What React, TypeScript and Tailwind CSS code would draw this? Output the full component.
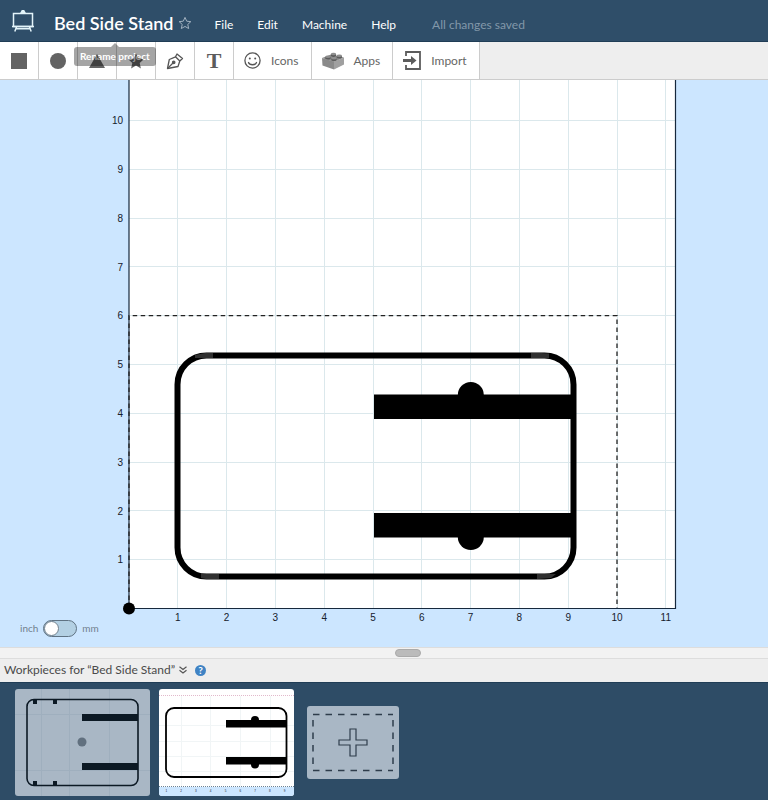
import { useState, type ReactNode } from "react";
import { clsx } from "clsx";

const UNIT = 48.8;
const ORIGIN_X = 129;
const ORIGIN_Y = 528.5;

const menus = ["File", "Edit", "Machine", "Help"];
const columns = Array.from({ length: 11 }, (_, i) => i + 1);
const rows = Array.from({ length: 10 }, (_, i) => i + 1);

function EaselLogo() {
  return (
    <svg viewBox="0 0 22 24" className="h-6 w-[22px]" fill="none" stroke="#e3f4fa" strokeWidth="1.500">
      <rect x="1.500" y="4.500" width="19" height="13" />
      <path d="M0 17.500h22M4.500 18l-1.700 4.500M17.500 18l1.700 4.500M4 19.800h14" />
      <path d="M9 4c0-1 .8-1 1.200-2.200h1.600C12.200 3 13 3 13 4z" fill="#e3f4fa" />
    </svg>
  );
}

function PenIcon() {
  return (
    <svg viewBox="0 0 18 18" className="h-[18px] w-[18px]" fill="none" stroke="#555" strokeWidth="1.300" strokeLinejoin="round">
      <path d="M1.500 16.500L3.300 7.500L9.500 4.800L11 2L16.500 6.500L13.800 9L12 14.500z" />
      <path d="M9.500 4.800L13.800 9M1.500 16.500L7 11" />
      <circle cx="7.700" cy="10.300" r="1.200" fill="#555" />
    </svg>
  );
}

function BrickIcon() {
  return (
    <svg viewBox="0 0 22 18" className="h-[18px] w-[22px]">
      <path d="M0 6L9 2.500L22 5.500L12 10z" fill="#8b8b8b" />
      <path d="M0 6L12 9.500V17.500L0.500 13.500z" fill="#8a8a8a" />
      <path d="M12 9.500L22 5.500V12.500L12 17.500z" fill="#a0a0a0" />
      {[
        [6, 5.5],
        [11.5, 2.8],
        [12, 7],
        [17.3, 4.5],
      ].map(([x, y]) => (
        <g key={x}>
          <path d={`M${x - 2.6} ${y - 0.8}v1.600a2.600 1.300 0 0 0 5.200 0v-1.600z`} fill="#5a5a5a" />
          <ellipse cx={x} cy={y - 0.8} rx="2.600" ry="1.200" fill="#8e8e8e" />
        </g>
      ))}
    </svg>
  );
}

function ImportIcon() {
  return (
    <svg viewBox="0 0 18 19" className="h-[19px] w-[18px]" fill="none" stroke="#5c5c5c" strokeWidth="1.800">
      <path d="M3 5V1H17V18H3V14" />
      <path d="M0 9.500H9" strokeWidth="3" />
      <path d="M8 5L13.500 9.500L8 14z" fill="#5c5c5c" stroke="none" />
    </svg>
  );
}

function SmileIcon() {
  return (
    <svg viewBox="0 0 17 17" className="h-[17px] w-[17px]" fill="none" stroke="#555" strokeWidth="1.300">
      <circle cx="8.500" cy="8.500" r="7.600" />
      <path d="M4.500 10.500c1 3 7 3 8 0" strokeLinecap="round" />
      <circle cx="5.800" cy="6.500" r="1" fill="#555" stroke="none" />
      <circle cx="11.200" cy="6.500" r="1" fill="#555" stroke="none" />
    </svg>
  );
}

const STAR = "M8 .5l2.300 5.100 5.500.600-4.100 3.700 1.200 5.500L8 12.600l-4.900 2.800 1.200-5.500L.2 6.200l5.500-.600z";

const shapes: { label: string; icon: ReactNode }[] = [
  {
    label: "Square",
    icon: (
      <svg viewBox="0 0 16 16" className="h-4 w-4">
        <rect width="16" height="16" fill="#636363" />
      </svg>
    ),
  },
  {
    label: "Circle",
    icon: (
      <svg viewBox="0 0 16 16" className="h-4 w-4">
        <circle cx="8" cy="8" r="8" fill="#636363" />
      </svg>
    ),
  },
  {
    label: "Triangle",
    icon: (
      <svg viewBox="0 0 16 16" className="h-4 w-4">
        <path d="M8 1L16 15H0z" fill="#636363" />
      </svg>
    ),
  },
  {
    label: "Star",
    icon: (
      <svg viewBox="0 0 16 16" className="h-4 w-4">
        <path d={STAR} fill="#636363" />
      </svg>
    ),
  },
  { label: "Pen", icon: <PenIcon /> },
  {
    label: "Text",
    icon: <span className="font-['Liberation_Serif',serif] text-[22px] leading-6 font-bold text-[#5c5c5c]">T</span>,
  },
];

const tools = [
  { label: "Icons", icon: <SmileIcon /> },
  { label: "Apps", icon: <BrickIcon /> },
  { label: "Import", icon: <ImportIcon /> },
];

function Header() {
  return (
    <header className="flex h-[42px] items-center border-b border-[#203d56] bg-[#2f4e69] pl-3 text-white">
      <EaselLogo />
      <div className="relative ml-5 flex items-center gap-1 pt-1">
        <h1 className="text-[18px] leading-6 font-semibold whitespace-nowrap">Bed Side Stand</h1>
        <button type="button" aria-label="Favorite project" className="pl-px">
          <svg viewBox="0 0 16 16" className="h-3 w-3" fill="none" stroke="#a3b3c1" strokeWidth="1.300">
            <path d={STAR} />
          </svg>
        </button>
        {/* Hover hint hanging below the project name, fading in over the toolbar */}
        <div
          role="tooltip"
          className="pointer-events-none absolute top-full left-5 z-10 mt-3 rounded-[3px] bg-black px-[6px] text-[10px] leading-[19px] font-bold whitespace-nowrap text-white opacity-35"
        >
          <span className="absolute -top-1 left-1/2 -ml-1 border-x-4 border-b-4 border-x-transparent border-b-black" />
          Rename project
        </div>
      </div>
      <nav className="ml-6 flex gap-6 pt-2 text-[12px] leading-5">
        {menus.map((menu) => (
          <button key={menu} type="button">
            {menu}
          </button>
        ))}
      </nav>
      <span className="ml-9 pt-2 text-[12px] leading-5 whitespace-nowrap text-[#8298aa]">All changes saved</span>
    </header>
  );
}

function Toolbar() {
  return (
    <div className="flex h-[38px] border-b border-[#ccc] bg-[#eee]">
      {shapes.map(({ label, icon }) => (
        <button
          key={label}
          type="button"
          aria-label={label}
          className="flex w-[39px] items-center justify-center border-r border-[#ccc] bg-white"
        >
          {icon}
        </button>
      ))}
      {tools.map(({ label, icon }) => (
        <button
          key={label}
          type="button"
          className="flex items-center gap-[10px] border-r border-[#ccc] bg-white pr-3 pl-[10px] text-[12px] leading-5 text-[#666]"
        >
          {icon}
          {label}
        </button>
      ))}
    </div>
  );
}

function Workspace() {
  return (
    <svg viewBox="0 0 768 567" className="block w-full" role="img" aria-label="Design area">
      <rect x={ORIGIN_X} y="-2" width="547" height="530.500" fill="#fff" />
      <g stroke="#dbe8ec">
        {columns.map((n) => (
          <path key={n} d={`M${Math.floor(ORIGIN_X + n * UNIT) + 0.5} 0V528`} />
        ))}
        {rows.map((n) => (
          <path key={n} d={`M129 ${Math.floor(ORIGIN_Y - n * UNIT) + 0.5}H675`} />
        ))}
      </g>
      <path d="M129 0V528.500H675.500V0" fill="none" stroke="#16283c" strokeWidth="1.200" />
      <path d="M129 528V235.700H617V528" fill="none" stroke="#222" strokeWidth="1.300" strokeDasharray="4.500 3.500" />
      <g className="font-['Liberation_Sans',sans-serif] text-[10px]" fill="#16202c">
        {columns.map((n) => (
          <text key={n} x={ORIGIN_X + n * UNIT} y="541" textAnchor="middle">
            {n}
          </text>
        ))}
        {rows.map((n) => (
          <text key={n} x="123" y={ORIGIN_Y - n * UNIT + 3.6} textAnchor="end">
            {n}
          </text>
        ))}
      </g>
      <rect x="177.500" y="275.500" width="396" height="221" rx="29" fill="none" stroke="#000" strokeWidth="6" />
      <g fill="#303030">
        <path d="M195 275L205 273h8v5h-18zM531 273h10l8 .500v4.500h-18z" />
        <path d="M201 494h18v5h-13l-5-1zM537 494h19l-5 4-14 1z" />
      </g>
      <path d="M374 314.500H574V339H374zM374 433H574V457.500H374z" />
      <circle cx="470.800" cy="315" r="13" />
      <circle cx="470.800" cy="457" r="13" />
      <circle cx={ORIGIN_X} cy={ORIGIN_Y} r="6" />
    </svg>
  );
}

function UnitSwitch() {
  const [metric, setMetric] = useState(false);

  return (
    <label className="absolute bottom-[10px] left-5 flex items-center gap-[5px] text-[10px] leading-[18px] text-[#71808d]">
      inch
      <input
        type="checkbox"
        role="switch"
        aria-label="Use millimeters"
        className="sr-only"
        checked={metric}
        onChange={(e) => setMetric(e.target.checked)}
      />
      <span
        className={clsx(
          "flex h-[17px] w-[34px] items-center rounded-full border border-[#5f7282] bg-[#b3d0e3]",
          metric && "justify-end"
        )}
      >
        <span className="h-[15px] w-[15px] rounded-full border border-[#71808d] bg-white" />
      </span>
      mm
    </label>
  );
}

function BedPreview() {
  return (
    <svg viewBox="0 0 135 107" className="block w-full">
      <rect width="135" height="107" fill="#a9b7c5" />
      <path d="M26.500 0V107M54.500 0V107M94.500 0V107M0 25.500H135M0 81.500H135" stroke="#9fafbe" />
      <rect x="12" y="10.500" width="111" height="86" rx="7" fill="none" stroke="#0c1924" strokeWidth="1.600" />
      <path d="M67 25h56v7H67zM67 74h56v7H67z" fill="#0c1924" />
      <path d="M18 11h4v4h-4zM38 11h4v4h-4zM18 92h4v4h-4zM38 92h4v4h-4z" fill="#0c1924" />
      <circle cx="67" cy="53" r="4.500" fill="#61707f" />
    </svg>
  );
}

function StandPreview() {
  return (
    <svg viewBox="0 0 135 107" className="block w-full">
      <rect width="135" height="107" fill="#fff" />
      <path d="M22.500 7V97M51.500 7V97M81.500 7V97M111.500 7V97M0 36.500H135M0 52.500H135M0 67.500H135M0 82.500H135" stroke="#f1f5f6" />
      <path d="M0 6.500H135" stroke="#e2b9cb" strokeDasharray="1 1" />
      <rect y="98" width="135" height="9" fill="#cce6ff" />
      <path d="M0 97.500H135" stroke="#6b8295" strokeDasharray="1 1" />
      <rect x="7" y="19" width="120.500" height="69" rx="8" fill="none" stroke="#000" strokeWidth="1.800" />
      <path d="M67 31h61v7.500H67zM67 68h61v7.500H67z" />
      <circle cx="96" cy="31" r="4" />
      <circle cx="96" cy="75.500" r="4" />
      {columns.slice(0, 9).map((n) => (
        <text
          key={n}
          x={n * 14.8 - 7.5}
          y="102.500"
          textAnchor="middle"
          fill="#16202c"
          className="font-['Liberation_Sans',sans-serif] text-[3px]"
        >
          {n}
        </text>
      ))}
    </svg>
  );
}

function Workpieces() {
  return (
    <section className="bg-[#2e4c66]">
      <div className="flex h-6 items-center gap-1 border-t border-[#ddd] bg-[#eee] px-1 pb-px text-[#4a4a4a]">
        <h2 className="text-[12px] leading-5">Workpieces for “Bed Side Stand”</h2>
        <button type="button" aria-label="Collapse workpieces">
          <svg viewBox="0 0 8 8" className="h-2 w-2" fill="none" stroke="#555" strokeWidth="1.200">
            <path d="M.5.800L4 3.500L7.500.800M.5 4.300L4 7L7.500 4.300" />
          </svg>
        </button>
        <button
          type="button"
          aria-label="Help"
          className="ml-1 h-[11px] w-[11px] rounded-full bg-[#3f83c4] text-[10px] leading-[11px] font-bold text-white"
        >
          ?
        </button>
      </div>
      <div className="flex items-center gap-[13px] border-t border-[#203d56] px-[15px] pt-[6px] pb-1">
        <div className="flex gap-[9px]">
          <button type="button" aria-label="Workpiece 1" className="w-[135px] overflow-hidden rounded-[3px]">
            <BedPreview />
          </button>
          <button type="button" aria-label="Workpiece 2" className="w-[135px] overflow-hidden rounded-[3px]">
            <StandPreview />
          </button>
        </div>
        <button type="button" aria-label="Add workpiece" className="w-[92px] overflow-hidden rounded-[3px] bg-[#a9b7c5]">
          <svg viewBox="0 0 92 73" className="block w-full" fill="none" stroke="#2e3c4b">
            <path d="M6 8.500H86M6 64.500H86" strokeWidth="1.500" strokeDasharray="6.500 6" />
            <path d="M6 10V63M86 10V63" strokeWidth="1.500" strokeDasharray="6.500 6" strokeDashoffset="-4" />
            <path d="M43 23h6v11h11v5H49v11h-6V39H32v-5h11z" strokeWidth="1.200" />
          </svg>
        </button>
      </div>
    </section>
  );
}

export default function App() {
  return (
    <div className="flex min-h-screen flex-col bg-[#2e4c66] font-[Lato,sans-serif]">
      <Header />
      <Toolbar />
      <main className="relative bg-[#cce6ff]">
        <Workspace />
        <UnitSwitch />
      </main>
      <div className="flex h-[11px] items-center justify-center border-t border-[#ddd] bg-[#f2f2f2] pl-12">
        <div className="h-2 w-[26px] rounded-full border border-[#aaa] bg-[#bbb]" />
      </div>
      <Workpieces />
    </div>
  );
}
